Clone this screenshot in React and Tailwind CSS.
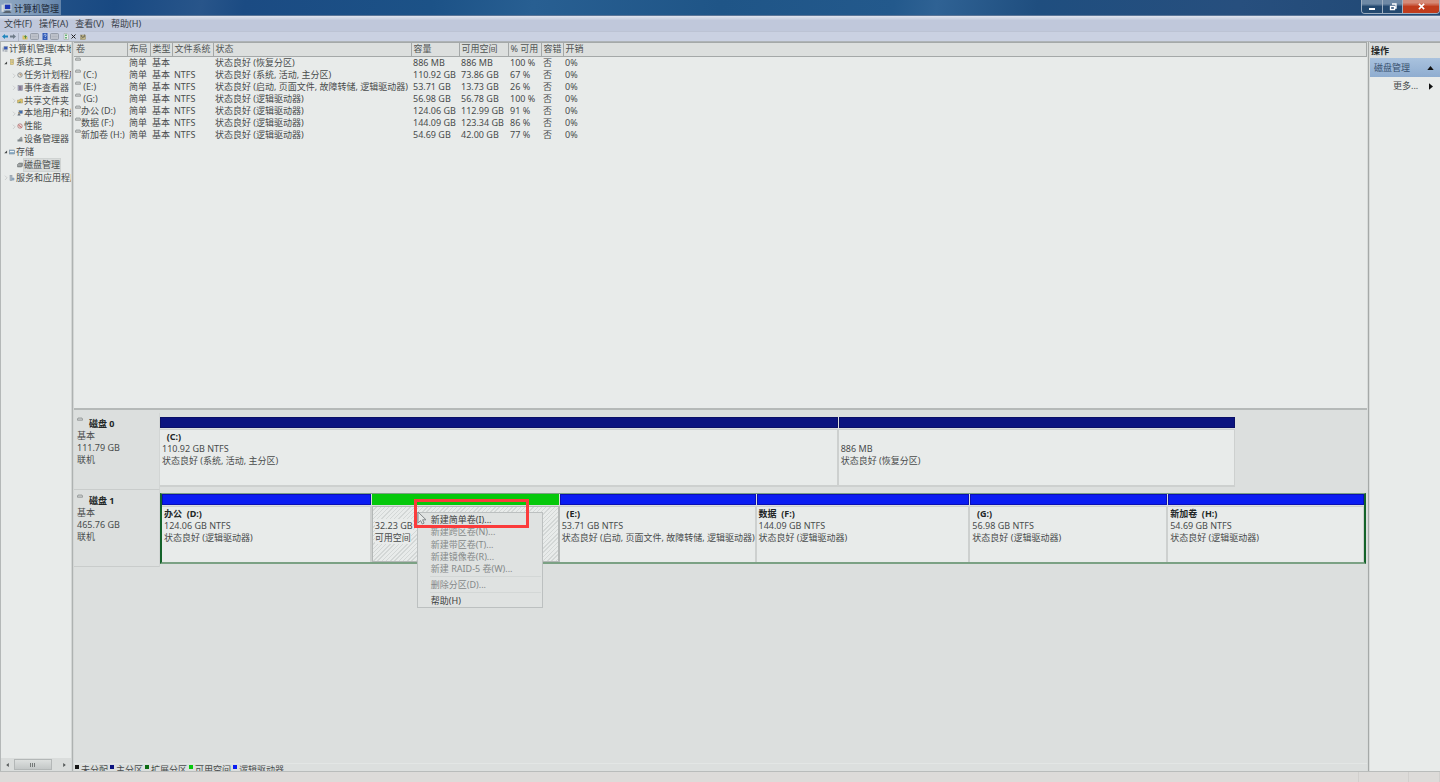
import React from 'react';

const volumes = [
  ['', '', '状态良好 (恢复分区)', '886 MB', '886 MB', '100 %'],
  ['\u00a0(C:)', 'NTFS', '状态良好 (系统, 活动, 主分区)', '110.92 GB', '73.86 GB', '67 %'],
  ['\u00a0(E:)', 'NTFS', '状态良好 (启动, 页面文件, 故障转储, 逻辑驱动器)', '53.71 GB', '13.73 GB', '26 %'],
  ['\u00a0(G:)', 'NTFS', '状态良好 (逻辑驱动器)', '56.98 GB', '56.78 GB', '100 %'],
  ['办公 (D:)', 'NTFS', '状态良好 (逻辑驱动器)', '124.06 GB', '112.99 GB', '91 %'],
  ['数据 (F:)', 'NTFS', '状态良好 (逻辑驱动器)', '144.09 GB', '123.34 GB', '86 %'],
  ['新加卷 (H:)', 'NTFS', '状态良好 (逻辑驱动器)', '54.69 GB', '42.00 GB', '77 %'],
];

const columns = ['卷', '布局', '类型', '文件系统', '状态', '容量', '可用空间', '% 可用', '容错', '开销'];

const tree = [
  { level: 0, icon: 'computer', text: '计算机管理(本地)' },
  { level: 1, icon: 'tools', text: '系统工具', open: true },
  { level: 2, icon: 'clock', text: '任务计划程序', closed: true },
  { level: 2, icon: 'event', text: '事件查看器', closed: true },
  { level: 2, icon: 'share', text: '共享文件夹', closed: true },
  { level: 2, icon: 'users', text: '本地用户和组', closed: true },
  { level: 2, icon: 'perf', text: '性能', closed: true },
  { level: 2, icon: 'device', text: '设备管理器' },
  { level: 1, icon: 'storage', text: '存储', open: true },
  { level: 2, icon: 'disk', text: '磁盘管理', selected: true },
  { level: 1, icon: 'service', text: '服务和应用程序', closed: true },
];

const indents = ['pl-px', 'pl-[3px]', 'pl-[11px]'];

function TreeIcon({ name }) {
  const art = {
    computer: (
      <>
        <rect x="4" y="1" width="7" height="6" fill="#3457b8" stroke="#7f8ba0" />
        <rect x="1" y="3" width="3" height="8" fill="#a9b1bb" />
        <path d="M5 10h6" stroke="#6c7580" strokeWidth="1.5" />
      </>
    ),
    tools: (
      <>
        <rect x="3" y="1" width="6" height="10" fill="#e3cf83" stroke="#a99a5c" />
        <path d="M5 4h3M5 7h3" stroke="#8b93a3" />
      </>
    ),
    clock: (
      <>
        <circle cx="6" cy="6" r="4.5" fill="#e9e6da" stroke="#777d86" strokeWidth="1.5" />
        <path d="M6 3v3h3" stroke="#8d5f35" fill="none" strokeWidth="1.3" />
      </>
    ),
    event: (
      <>
        <rect x="2" y="1" width="9" height="10" fill="#a8a9c4" stroke="#80818f" />
        <path d="M4 4h5M4 8h5" stroke="#694b5c" strokeWidth="2" />
      </>
    ),
    share: (
      <>
        <path d="M1 4h4l1-2h5v8H1z" fill="#dec267" stroke="#a69660" />
        <path d="M2 10h5V6z" fill="#608d86" />
      </>
    ),
    users: (
      <>
        <rect x="4" y="1" width="7" height="6" fill="#426dad" stroke="#838f9c" />
        <circle cx="4" cy="6" r="2" fill="#9a8b72" />
        <path d="M1 11c0-4 6-4 6 0z" fill="#626d78" />
      </>
    ),
    perf: (
      <>
        <circle cx="6" cy="6" r="4.5" fill="#eed9d7" stroke="#a77a79" strokeWidth="1.5" />
        <path d="M3 4l6 5" stroke="#b93a3d" strokeWidth="1.5" />
      </>
    ),
    device: (
      <>
        <path d="M1 7h10v4H1z" fill="#7f878a" />
        <path d="M4 7l4-5 2 1v4z" fill="#a4aaae" stroke="#74797c" />
      </>
    ),
    storage: (
      <>
        <rect x="1" y="2" width="10" height="8" fill="#90b0c8" stroke="#6a8093" />
        <path d="M2 5h8" stroke="#eef4f7" strokeWidth="2" />
      </>
    ),
    disk: (
      <>
        <path d="M1 5l3-3h7v6l-2 2H1z" fill="#8d9191" stroke="#6f7474" />
        <path d="M2 6h6" stroke="#d9dddd" />
      </>
    ),
    service: (
      <>
        <rect x="2" y="1" width="4" height="10" fill="#b1bcc7" stroke="#7f8c99" />
        <circle cx="8" cy="8" r="3" fill="#8aa3ba" />
      </>
    ),
  };
  return (
    <svg viewBox="0 0 12 12" className="mr-px h-1.5 w-1.5 shrink-0" aria-hidden="true">
      {art[name]}
    </svg>
  );
}

function DriveIcon() {
  return (
    <svg viewBox="0 0 12 8" className="h-1 w-1.5 shrink-0" aria-hidden="true">
      <path d="M1 4l1-2h8l1 2v2.500H1z" fill="#c9cccc" stroke="#858989" strokeWidth="1.4" />
    </svg>
  );
}

function Sidebar() {
  return (
    <nav className="flex w-[71px] shrink-0 flex-col overflow-hidden border-l border-[#b4b8b8] bg-[#e8ebea]">
      <ul className="mt-px flex h-[141px] flex-col">
        {tree.map((item) => (
          <li key={item.text} className={`flex min-h-0 flex-1 items-center whitespace-nowrap ${indents[item.level]}`}>
            {item.level > 0 && (
              <svg viewBox="0 0 5 7" className="mr-px h-[5px] w-1 shrink-0" aria-hidden="true">
                {item.open && <path d="M4 2v4H0z" fill="#454949" />}
                {item.closed && <path d="M1 1l3 3-3 3" fill="none" stroke="#bfc3c3" />}
              </svg>
            )}
            <TreeIcon name={item.icon} />
            <a
              href="#tree"
              className={`flex h-3 items-center ${item.selected ? 'bg-[#d9dcdb] outline outline-[#cfd3d2]' : ''}`}
            >
              {item.text}
            </a>
          </li>
        ))}
      </ul>
      <div className="mt-auto flex h-[13px] items-center bg-[#dadddc]">
        <button aria-label="向左滚动" className="flex w-[13px] justify-center">
          <svg viewBox="0 0 4 6" className="h-1 w-[3px]"><path d="M4 0v6L0 3z" fill="#555959" /></svg>
        </button>
        <button aria-label="滚动条" className="flex h-[11px] w-[38px] items-center justify-center border border-[#b3b7b7] bg-linear-to-b from-[#dde0df] to-[#c3c7c7]">
          <svg viewBox="0 0 6 4" className="h-1 w-1.5"><path d="M.5 0v4M2.5 0v4M4.5 0v4" stroke="#757979" /></svg>
        </button>
        <button aria-label="向右滚动" className="ml-auto flex w-[13px] justify-center">
          <svg viewBox="0 0 4 6" className="h-1 w-[3px]"><path d="M0 0v6l4-3z" fill="#555959" /></svg>
        </button>
      </div>
    </nav>
  );
}

function VolumeTable() {
  return (
    <div className="min-h-0 flex-[366] overflow-hidden border-t border-[#a4a8a8] bg-[#e8ebea]">
      <table className="w-full table-fixed border-collapse text-left">
        <colgroup>
          <col className="w-[53px]" />
          <col className="w-[23px]" />
          <col className="w-[22px]" />
          <col className="w-[41px]" />
          <col className="w-[198px]" />
          <col className="w-[48px]" />
          <col className="w-[49px]" />
          <col className="w-[33px]" />
          <col className="w-[22px]" />
          <col />
        </colgroup>
        <thead>
          <tr className="h-[13px] bg-[#dcdfde] text-[#505454]">
            {columns.map((c) => (
              <th key={c} className="border-r border-b border-[#a4a8a8] p-0 pl-0.5 font-normal whitespace-nowrap">
                {c}
              </th>
            ))}
          </tr>
        </thead>
        <tbody>
          {volumes.map(([name, fs, status, size, free, pct]) => (
            <tr key={name} className="h-3">
              <td className="p-0 pl-px">
                <div className="flex h-3 items-start whitespace-pre">
                  <DriveIcon />
                  {name}
                </div>
              </td>
              {['简单', '基本', fs, status, size, free, pct, '否', '0%'].map((v, i) => (
                <td key={i} className="p-0 pl-0.5 whitespace-nowrap">{v}</td>
              ))}
            </tr>
          ))}
        </tbody>
      </table>
    </div>
  );
}

const barColors = {
  primary: 'bg-[#0b137f] border-[#0a0f66]',
  logical: 'bg-[#0a1cf2] border-[#0a10b4]',
  free: 'bg-[#05c80b] border-[#05c80b]',
};

const disks = [
  {
    name: '磁盘 0',
    size: '111.79 GB',
    parts: [
      { name: '\u00a0\u00a0(C:)', size: '110.92 GB NTFS', status: '状态良好 (系统, 活动, 主分区)', kind: 'primary', grow: 679 },
      { name: '', size: '886 MB', status: '状态良好 (恢复分区)', kind: 'primary', grow: 396 },
    ],
  },
  {
    name: '磁盘 1',
    size: '465.76 GB',
    extended: true,
    parts: [
      { name: '办公  (D:)', size: '124.06 GB NTFS', status: '状态良好 (逻辑驱动器)', kind: 'logical', grow: 210 },
      { name: '', size: '32.23 GB', status: '可用空间', kind: 'free', grow: 188 },
      { name: '\u00a0\u00a0(E:)', size: '53.71 GB NTFS', status: '状态良好 (启动, 页面文件, 故障转储, 逻辑驱动器)', kind: 'logical', grow: 197 },
      { name: '数据  (F:)', size: '144.09 GB NTFS', status: '状态良好 (逻辑驱动器)', kind: 'logical', grow: 214 },
      { name: '\u00a0\u00a0(G:)', size: '56.98 GB NTFS', status: '状态良好 (逻辑驱动器)', kind: 'logical', grow: 198 },
      { name: '新加卷  (H:)', size: '54.69 GB NTFS', status: '状态良好 (逻辑驱动器)', kind: 'logical', grow: 196 },
    ],
  },
];

const menuItems = ['新建简单卷(I)...', '新建跨区卷(N)...', '新建带区卷(T)...', '新建镜像卷(R)...', '新建 RAID-5 卷(W)...'];

function ContextMenu() {
  return (
    <>
      <div role="menu" className="absolute top-[18px] left-[45px] z-10 flex h-24 w-[126px] flex-col border border-[#bcc0c0] bg-[#dfe2e1] pt-px text-[#858989]">
        <div className="flex h-[62px] flex-col">
          {menuItems.map((t, i) => (
            <button key={t} role="menuitem" disabled={i > 0} className={`flex-1 pl-[13px] text-left whitespace-nowrap ${i === 0 ? 'text-[#3c4040]' : ''}`}>
              {t}
            </button>
          ))}
        </div>
        <hr className="mt-px mr-px ml-3 border-[#d3d7d6]" />
        <button role="menuitem" disabled className="mt-px h-[13px] pl-[13px] text-left">删除分区(D)...</button>
        <hr className="mt-px mr-px ml-3 border-[#d3d7d6]" />
        <button role="menuitem" className="mt-px h-[13px] pl-[13px] text-left text-[#3c4040]">帮助(H)</button>
      </div>
      <div className="absolute top-[5px] left-[42px] z-20 h-[29px] w-[115px] border-3 border-[#fb3b3b]" />
      <svg viewBox="0 0 10 14" className="absolute top-[17px] left-[45px] z-20 h-[14px] w-[10px]" aria-hidden="true">
        <path d="M1 1v11l2.6-2.4L5.3 13l1.8-.9-1.5-3.3H9z" fill="#e6e9e8" stroke="#83888a" />
      </svg>
    </>
  );
}

function Partition({ part, last }) {
  const free = part.kind === 'free';
  return (
    <div className="relative flex min-w-0 basis-0 flex-col" style={{ flexGrow: part.grow }}>
      <div className={`h-[11px] border ${last ? '' : 'mr-px'} ${barColors[part.kind]}`} />
      <div
        className={`mt-px min-h-0 flex-1 overflow-hidden border-t pt-px pl-0.5 whitespace-nowrap ${
          free
            ? 'border-r-2 border-b border-l border-[#b4b8b7] bg-[repeating-linear-gradient(135deg,#e8ebea_0px,#e8ebea_2px,#d3d7d6_2px,#d3d7d6_3px)]'
            : `border-[#cdd0cf] bg-[#e8ebea] ${last ? 'border-r' : 'border-r-2'}`
        }`}
      >
        <div className="h-3 font-bold whitespace-pre text-[#222626]">{part.name}</div>
        <div className="h-3"><span className={free ? 'bg-[#e8ebea]' : ''}>{part.size}</span></div>
        <div className="h-3"><span className={free ? 'bg-[#e8ebea]' : ''}>{part.status}</span></div>
      </div>
      {free && <ContextMenu />}
    </div>
  );
}

function DiskRow({ disk }) {
  return (
    <section className="flex h-[77px] shrink-0">
      <div className="w-[86px] shrink-0 border-r border-b border-[#c9cccb] border-r-[#d2d5d4] pl-[3px]">
        <div className="mt-1 flex h-[13px] items-start gap-1.5">
          <DriveIcon />
          <h2 className="pt-px font-bold text-[#222626]">{disk.name}</h2>
        </div>
        <div className="h-3">基本</div>
        <div className="h-3">{disk.size}</div>
        <div className="h-3">联机</div>
      </div>
      <div className="flex min-w-0 flex-1 pr-px">
        <div
          className={`flex min-w-0 ${
            disk.extended
              ? 'mt-[3px] h-[71px] w-full border-x-2 border-t border-b-2 border-x-[#14632a] border-y-[#7ba184]'
              : 'mt-1 h-[70px] w-[89.1%] border-b-2 border-[#cdd0cf]'
          }`}
        >
          {disk.parts.map((p, i) => (
            <Partition key={p.size} part={p} last={i === disk.parts.length - 1} />
          ))}
        </div>
      </div>
    </section>
  );
}

const legend = [
  ['未分配', 'bg-[#151515]'],
  ['主分区', 'bg-[#0b137f]'],
  ['扩展分区', 'bg-[#0b6b12]'],
  ['可用空间', 'bg-[#05c80b]'],
  ['逻辑驱动器', 'bg-[#0a1cf2]'],
];

function Toolbar() {
  return (
    <div className="flex h-[10px] items-center border-t border-[#bcc3d4] bg-[#cad1e2] pl-0.5">
      <button aria-label="后退" className="mr-0.5"><svg viewBox="0 0 12 10" className="h-[5px] w-1.5"><path d="M6 0L0 5l6 5V7h6V3H6z" fill="#2186bd" /></svg></button>
      <button aria-label="前进" className="mr-0.5"><svg viewBox="0 0 12 10" className="h-[5px] w-1.5"><path d="M6 0l6 5-6 5V7H0V3h6z" fill="#6e7b88" /></svg></button>
      <span className="mr-[3px] h-2 w-px bg-[#aeb6c6]" />
      <button aria-label="上移" className="mr-0.5"><svg viewBox="0 0 12 12" className="h-1.5 w-1.5"><path d="M1 3h5l1 2h4v6H1z" fill="#d6bf65" /><path d="M4 6l3-4 3 4H8v3H6V6z" fill="#4d8d40" /></svg></button>
      <button aria-label="显示控制台树" className="mr-[3px]"><svg viewBox="0 0 18 14" className="h-[7px] w-[9px]"><rect x="1" y="1" width="16" height="12" rx="2" fill="#c3c8cf" stroke="#868e99" strokeWidth="1.5" /><path d="M3 4h12M3 7h12M3 10h12" stroke="#a0a7b1" /></svg></button>
      <button aria-label="帮助" className="mr-0.5"><svg viewBox="0 0 12 14" className="h-[7px] w-1.5"><rect x="1" width="10" height="14" fill="#315bb8" /><path d="M4 5c0-4 5-3 4 0L6 8m0 2v2" stroke="#dfeafa" strokeWidth="1.5" fill="none" /></svg></button>
      <button aria-label="显示操作窗格" className="mr-1"><svg viewBox="0 0 18 14" className="h-[7px] w-[9px]"><rect x="1" y="1" width="16" height="12" rx="2" fill="#c3c8cf" stroke="#868e99" strokeWidth="1.5" /><path d="M3 4h12M3 7h12M3 10h12" stroke="#a0a7b1" /></svg></button>
      <button aria-label="刷新" className="mr-0.5"><svg viewBox="0 0 12 14" className="h-[7px] w-1.5"><path d="M2 1h6l3 3v9H2z" fill="#e9eee9" stroke="#96a39d" /><path d="M6 3v3M6 8v3" stroke="#3ba052" strokeWidth="3" /></svg></button>
      <button aria-label="删除" className="mr-1"><svg viewBox="0 0 10 10" className="h-[5px] w-[5px]"><path d="M1 1l8 8M9 1L1 9" stroke="#222" strokeWidth="2" /></svg></button>
      <button aria-label="属性"><svg viewBox="0 0 12 12" className="h-1.5 w-1.5"><rect x="1" y="2" width="10" height="9" fill="#c4b887" stroke="#8e8667" /><path d="M3 9l5-4M3 2v4h6V1" stroke="#6a6758" strokeWidth="1.5" fill="none" /></svg></button>
    </div>
  );
}

export default function App() {
  return (
    <div className="flex h-screen flex-col overflow-hidden bg-[#dcdfde] font-['Noto_Sans','Noto_Sans_CJK_SC',sans-serif] text-[9px] leading-3 text-[#484c4c]">
      <header className="flex h-4 shrink-0 items-start justify-between border-b border-[#5b7698] bg-[linear-gradient(100deg,#29568b_0%,#184982_8%,#28558a_14%,#1b4b83_17%,#1c5287_30%,#285f92_37%,#1f5587_50%,#23598c_62%,#2f6294_65%,#1f4e7f_72%,#274f7e_86%,#204874_100%)]">
        <div className="flex h-[15px] items-center gap-0.5 bg-linear-to-r from-[#8fa6c0] via-[#7f9bba] to-[#6384aa] pt-0.5 pr-0.5 pl-px">
          <svg viewBox="0 0 20 20" className="h-[11px] w-[11px]" aria-hidden="true">
            <rect x="6" y="2" width="12" height="10" fill="#1d36b4" stroke="#c5ced8" strokeWidth="2" />
            <rect x="1" y="3" width="4" height="13" fill="#d5dade" />
            <path d="M3 18l6-4h7l3 4z" fill="#59636e" />
          </svg>
          <h1 className="text-[#1a2635]">计算机管理</h1>
        </div>
        <div className="flex h-[14px] overflow-hidden rounded-b-sm border border-t-0 border-[#9fb0c2]">
          <button aria-label="最小化" className="flex w-[21px] items-center justify-center border-r border-[#9fb0c2] bg-linear-to-b from-[#6e89a5] from-30% to-[#24496f] to-50%">
            <svg viewBox="0 0 8 8" className="h-2 w-2"><path d="M1 6h6" stroke="#fff" strokeWidth="2" /></svg>
          </button>
          <button aria-label="还原" className="flex w-5 items-center justify-center border-r border-[#9fb0c2] bg-linear-to-b from-[#6e89a5] from-30% to-[#24496f] to-50%">
            <svg viewBox="0 0 8 8" className="h-2 w-2"><path d="M3 1h4v4H6M1.500 3.500h4v3h-4z" fill="none" stroke="#fff" strokeWidth="1.300" /></svg>
          </button>
          <button aria-label="关闭" className="flex w-9 items-center justify-center bg-linear-to-b from-[#d58b78] from-20% to-[#c03c1c] to-50%">
            <svg viewBox="0 0 8 8" className="h-[7px] w-[7px]"><path d="M1 1l6 6M7 1L1 7" stroke="#fff" strokeWidth="1.800" /></svg>
          </button>
        </div>
      </header>
      <div className="flex h-[15px] shrink-0 items-center gap-[7px] bg-linear-to-b from-[#e0e4ee] to-[#c0c8db] to-30% pl-1 text-[#373d48]">
        {['文件(F)', '操作(A)', '查看(V)', '帮助(H)'].map((m) => (
          <button key={m}>{m}</button>
        ))}
      </div>
      <Toolbar />
      <main className="flex min-h-0 flex-1 border-t border-[#aeb3b6]">
        <Sidebar />
        <div className="w-[3px] shrink-0 border-x border-[#d3d6d5] bg-[#aeb2b1]" />
        <div className="flex min-w-0 flex-1 flex-col">
          <VolumeTable />
          <div className="flex min-h-0 flex-[362] flex-col border-t-2 border-[#b5b9b8]">
            <div className="h-[3px] shrink-0" />
            {disks.map((d) => (
              <DiskRow key={d.name} disk={d} />
            ))}
            <div className="mt-auto flex h-2 shrink-0 items-start gap-0.5 overflow-hidden border-t border-[#e3e6e5] pl-px">
              {legend.map(([t, c]) => (
                <div key={t} className="flex items-start gap-[2px]">
                  <span className={`mt-px h-1 w-1 ${c}`} />
                  <span className="whitespace-nowrap">{t}</span>
                </div>
              ))}
            </div>
          </div>
        </div>
        <div className="w-[3px] shrink-0 border-x border-[#d8dbda] bg-[#a5a9a8]" />
        <aside className="w-[70px] shrink-0 border-t border-[#a4a8a8] bg-[#e8ebea]">
          <h2 className="h-[15px] bg-[#dcdfde] pt-[2px] pl-px font-bold text-[#222626]">操作</h2>
          <button className="flex h-[19px] w-full items-center justify-between bg-linear-to-b from-[#a9c2de] to-[#8fadd0] pt-px pr-1.5 pl-1 text-[#37506e]">
            磁盘管理
            <svg viewBox="0 0 8 5" className="h-1 w-[7px]" aria-hidden="true"><path d="M0 5l4-5 4 5z" fill="#111" /></svg>
          </button>
          <button className="flex h-[18px] w-full items-center justify-between pr-[7px] pl-[23px]">
            更多...
            <svg viewBox="0 0 5 8" className="h-[7px] w-1" aria-hidden="true"><path d="M0 0l5 4-5 4z" fill="#111" /></svg>
          </button>
        </aside>
      </main>
      <footer className="flex h-[11px] shrink-0 justify-end border-t border-[#b9bcbb] bg-[#dddbd9]">
        <div className="w-[50px] border-l border-[#d1cfcd]" />
        <div className="w-8 border-x border-[#d1cfcd]" />
      </footer>
    </div>
  );
}
